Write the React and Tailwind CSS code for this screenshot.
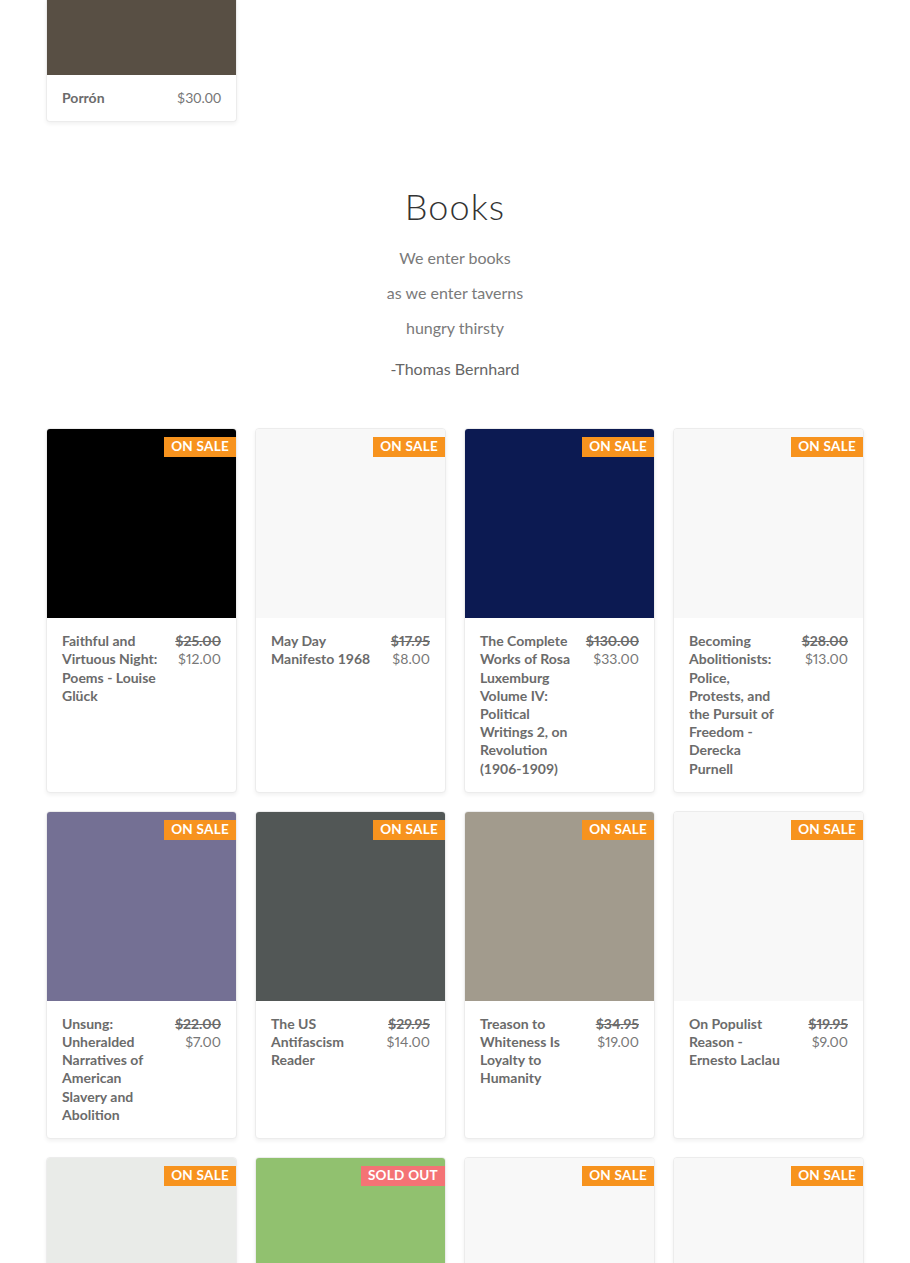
import React from 'react';

const books = [
  { title: 'Faithful and Virtuous Night: Poems - Louise Glück', was: '$25.00', now: '$12.00', img: 'bg-[#000000]' },
  { title: 'May Day Manifesto 1968', was: '$17.95', now: '$8.00', img: 'bg-[#f8f8f8]' },
  { title: 'The Complete Works of Rosa Luxemburg Volume IV: Political Writings 2, on Revolution (1906-1909)', was: '$130.00', now: '$33.00', img: 'bg-[#0c1a52]' },
  { title: 'Becoming Abolitionists: Police, Protests, and the Pursuit of Freedom - Derecka Purnell', was: '$28.00', now: '$13.00', img: 'bg-[#f8f8f8]' },
  { title: 'Unsung: Unheralded Narratives of American Slavery and Abolition', was: '$22.00', now: '$7.00', img: 'bg-[#747094]' },
  { title: 'The US Antifascism Reader', was: '$29.95', now: '$14.00', img: 'bg-[#525756]' },
  { title: 'Treason to Whiteness Is Loyalty to Humanity', was: '$34.95', now: '$19.00', img: 'bg-[#a29b8d]' },
  { title: 'On Populist Reason - Ernesto Laclau', was: '$19.95', now: '$9.00', img: 'bg-[#f8f8f8]' },
  { title: '', img: 'bg-[#e9ebe8]' },
  { title: '', img: 'bg-[#91c16f]', sold: true },
  { title: '', img: 'bg-[#f8f8f8]' },
  { title: '', img: 'bg-[#f8f8f8]' },
];

const Badge = ({ sold }) => (
  <span
    className={`absolute right-0 top-[8px] h-[20px] px-[7px] flex items-center text-[13.5px] font-bold leading-none text-white tracking-[0.02em] ${
      sold ? 'bg-[#f47375]' : 'bg-[#f7931e]'
    }`}
  >
    {sold ? 'SOLD OUT' : 'ON SALE'}
  </span>
);

const BookCard = ({ book }) => (
  <div className="bg-white rounded-[4px] border border-[#ececec] shadow-[0_2px_4px_rgba(0,0,0,0.06)] overflow-hidden flex flex-col">
    <div className={`relative aspect-square ${book.img}`}>
      <Badge sold={book.sold} />
    </div>
    {book.title && (
      <div className="flex justify-between gap-[14px] px-[15px] pt-[14px] pb-[14px] text-[14px] leading-[18.2px]">
        <div className="flex-1 font-bold text-[#6b6b6b]">{book.title}</div>
        <div className="shrink-0 min-w-[44px] text-right text-[#777] proportional-nums">
          <div className="font-bold text-[#6b6b6b] line-through">{book.was}</div>
          <div>{book.now}</div>
        </div>
      </div>
    )}
  </div>
);

export default function App() {
  return (
    <div className="min-h-screen bg-white font-['Lato',sans-serif] px-[46px] overflow-hidden h-[1263px]">
      {/* previous section tail */}
      <div className="grid grid-cols-4 gap-[18px]">
        <div className="bg-white rounded-b-[4px] border border-t-0 border-[#ececec] shadow-[0_2px_4px_rgba(0,0,0,0.06)] overflow-hidden">
          <div className="h-[75px] bg-[#584f44]" />
          <div className="flex justify-between px-[15px] pt-[14px] pb-[14px] text-[14px] leading-[18.2px]">
            <span className="font-bold text-[#6b6b6b]">Porrón</span>
            <span className="text-[#777]">$30.00</span>
          </div>
        </div>
      </div>

      {/* Books heading */}
      <div className="text-center pt-[61px]">
        <h2 className="text-[36px] font-light leading-[46px] text-[#333] tracking-[0.03em]">Books</h2>
        <div className="mt-[11px] text-[16px] text-[#7a7a7a] leading-[35px]">
          <p>We enter books</p>
          <p>as we enter taverns</p>
          <p>hungry thirsty</p>
        </div>
        <p className="mt-[6px] text-[16px] text-[#666] leading-[35px]">-Thomas Bernhard</p>
      </div>

      <div className="grid grid-cols-4 gap-[18px] mt-[42px]">
        {books.map((b, i) => (
          <BookCard key={i} book={b} />
        ))}
      </div>
    </div>
  );
}
